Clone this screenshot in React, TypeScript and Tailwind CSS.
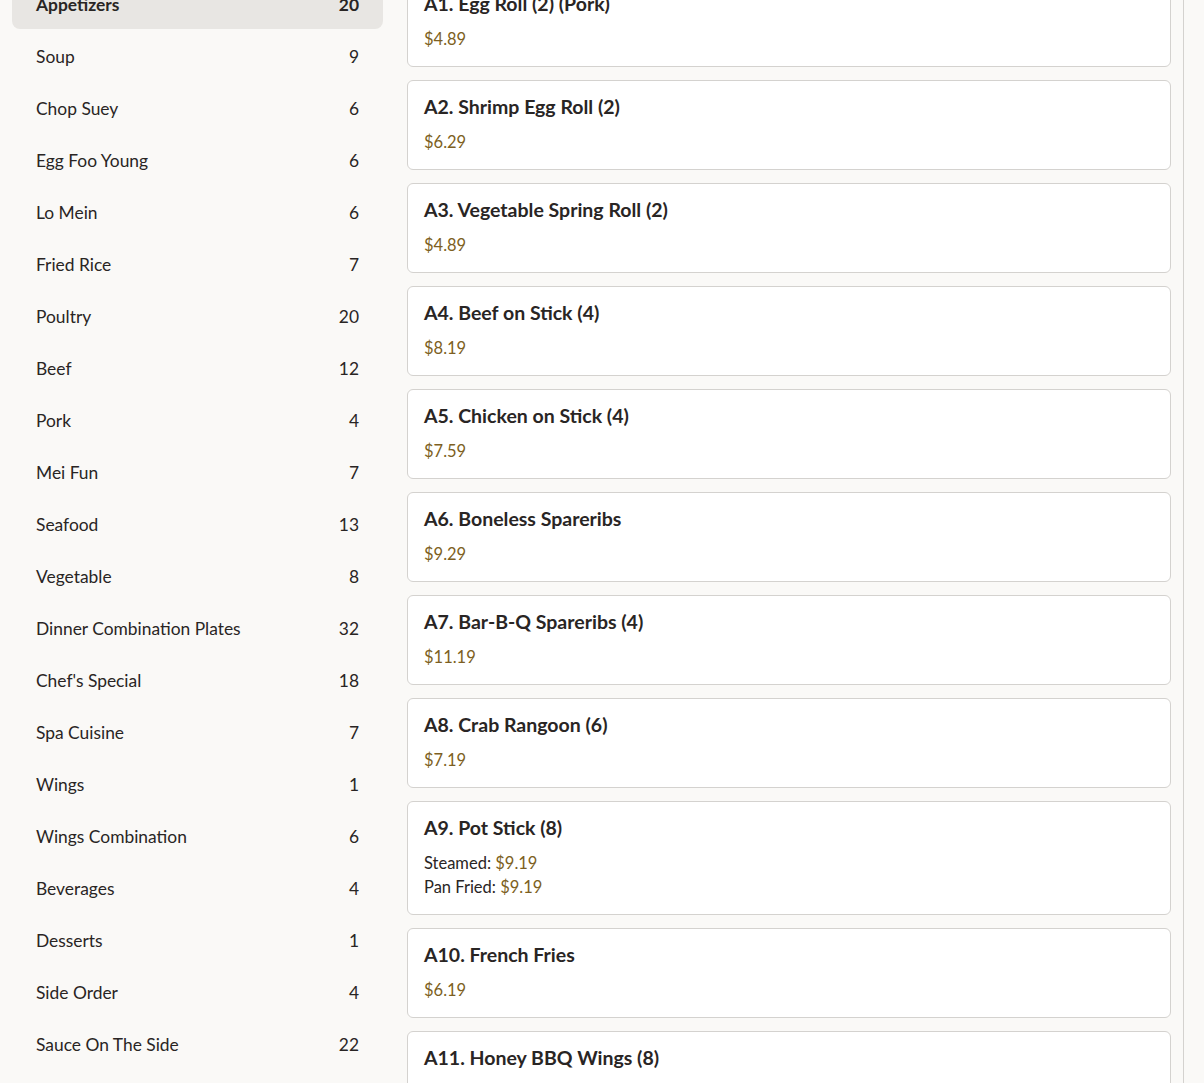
import React from "react";

const cats: [string, number][] = [
  ["Appetizers", 20],
  ["Soup", 9],
  ["Chop Suey", 6],
  ["Egg Foo Young", 6],
  ["Lo Mein", 6],
  ["Fried Rice", 7],
  ["Poultry", 20],
  ["Beef", 12],
  ["Pork", 4],
  ["Mei Fun", 7],
  ["Seafood", 13],
  ["Vegetable", 8],
  ["Dinner Combination Plates", 32],
  ["Chef's Special", 18],
  ["Spa Cuisine", 7],
  ["Wings", 1],
  ["Wings Combination", 6],
  ["Beverages", 4],
  ["Desserts", 1],
  ["Side Order", 4],
  ["Sauce On The Side", 22],
];

type Item = { name: string; prices: { label?: string; price: string }[] };

const items: Item[] = [
  { name: "A1. Egg Roll (2) (Pork)", prices: [{ price: "$4.89" }] },
  { name: "A2. Shrimp Egg Roll (2)", prices: [{ price: "$6.29" }] },
  { name: "A3. Vegetable Spring Roll (2)", prices: [{ price: "$4.89" }] },
  { name: "A4. Beef on Stick (4)", prices: [{ price: "$8.19" }] },
  { name: "A5. Chicken on Stick (4)", prices: [{ price: "$7.59" }] },
  { name: "A6. Boneless Spareribs", prices: [{ price: "$9.29" }] },
  { name: "A7. Bar-B-Q Spareribs (4)", prices: [{ price: "$11.19" }] },
  { name: "A8. Crab Rangoon (6)", prices: [{ price: "$7.19" }] },
  {
    name: "A9. Pot Stick (8)",
    prices: [
      { label: "Steamed:", price: "$9.19" },
      { label: "Pan Fried:", price: "$9.19" },
    ],
  },
  { name: "A10. French Fries", prices: [{ price: "$6.19" }] },
  { name: "A11. Honey BBQ Wings (8)", prices: [{ price: "$9.19" }] },
  { name: "A12. Fried Wings (8)", prices: [{ price: "$9.19" }] },
];

export default function App() {
  return (
    <div
      className="h-[1083px] w-[1204px] overflow-hidden bg-[#faf9f7] text-[#292524]"
      style={{ fontFamily: "Lato, 'Noto Sans', sans-serif" }}
    >
      <div className="flex h-full w-[1184px] border-r border-[#d4d2cf]">
        <aside className="w-[395px] shrink-0 px-3">
          <div className="mt-[-19px] flex flex-col gap-1">
            {cats.map(([n, c], i) => (
              <div
                key={n}
                className={`flex h-12 items-center justify-between rounded-lg px-6 text-[17.4px] ${
                  i === 0 ? "bg-[#e8e6e3] font-bold" : ""
                }`}
              >
                <span>{n}</span>
                <span>{c}</span>
              </div>
            ))}
          </div>
        </aside>
        <main className="flex-1 px-3">
          <div className="mt-[-23px] flex flex-col gap-[13px]">
            {items.map((it) => (
              <div
                key={it.name}
                className="rounded-md border border-[#d4d2cf] bg-white px-4 pt-3 pb-[15px]"
              >
                <div className="text-[19.5px] font-bold leading-7">{it.name}</div>
                <div className="mt-[9px]">
                  {it.prices.map((p, i) => (
                    <div key={i} className="text-[16.5px] leading-6">
                      {p.label && <span className="text-[#292524]">{p.label} </span>}
                      <span className="text-[#7d5f22]">{p.price}</span>
                    </div>
                  ))}
                </div>
              </div>
            ))}
          </div>
        </main>
      </div>
    </div>
  );
}
